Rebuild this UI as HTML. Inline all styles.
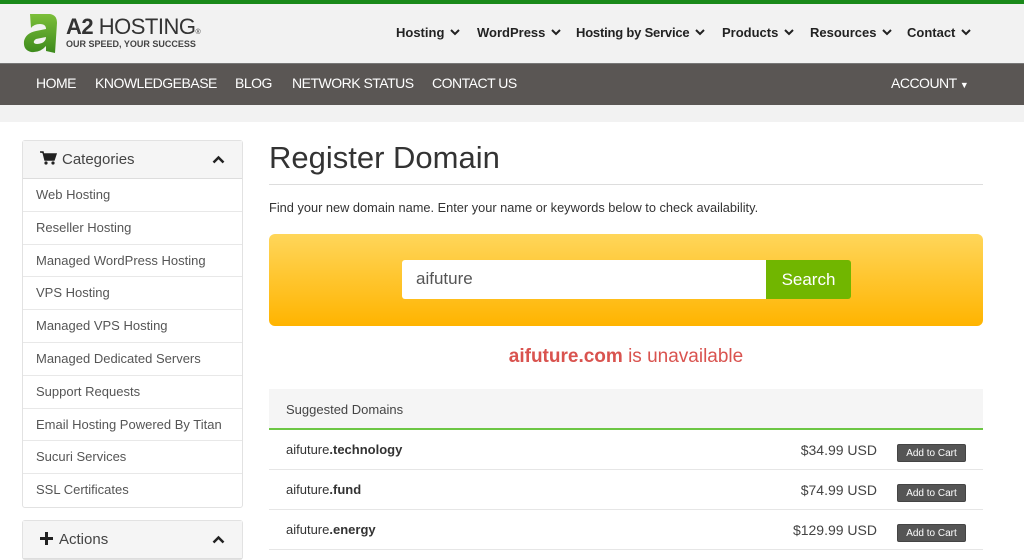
<!DOCTYPE html>
<html><head><meta charset="utf-8"><style>
*{margin:0;padding:0;box-sizing:border-box}
body{width:1024px;height:548px;overflow:hidden;background:#fff;font-family:"Liberation Sans",sans-serif;position:relative;color:#333}
.a{position:absolute}
.top{left:0;top:0;width:1024px;height:4px;background:#1a8a1a}
.hdr{left:0;top:4px;width:1024px;height:59px;background:#f2f2f2}
.mnav{top:25px;font-size:13px;font-weight:bold;color:#222}
.mnav svg{margin-left:6px;vertical-align:1px}
.nav{left:0;top:63px;width:1024px;height:42px;background:#5a5654;border-top:1px solid #777}
.nav span{position:absolute;top:11px;color:#fff;font-size:14px;letter-spacing:-0.5px}
.strip{left:0;top:105px;width:1024px;height:17px;background:#f2f2f2}
.side{left:22px;width:221px;border:1px solid #e2e2e2;border-radius:3px;background:#fff}
.side .h{height:38px;background:#f5f5f5;border-bottom:1px solid #ddd;font-size:15px;color:#444;padding:10px 0 0 17px;position:relative}
.side .i{height:32.8px;border-bottom:1px solid #e8e8e8;font-size:13px;color:#555;padding:8px 0 0 13px}
.car{position:absolute;right:17px;top:14px}
.row{left:269px;width:714px;height:40px;border-bottom:1px solid #e6e6e6;font-size:13px}
.row .d{position:absolute;left:17px;top:12px;color:#333}
.row .p{position:absolute;right:106px;top:12px;font-size:14px;color:#444}
.row .b{position:absolute;right:17px;top:14px;width:69px;height:18px;background:#555;border-radius:2px;color:#fff;font-size:10px;text-align:center;line-height:17px;border:1px solid #444}
</style></head><body>
<div class="a top"></div>
<div class="a hdr"></div>
<svg class="a" style="left:22px;top:13px" width="36" height="42" viewBox="0 0 36 42"><defs><linearGradient id="g" x1="0" y1="0" x2="0" y2="1"><stop offset="0" stop-color="#7cbf3a"/><stop offset="1" stop-color="#3d8a1c"/></linearGradient></defs><path d="M8 1 L28 1 Q35 2 35 10 L33 40 L24 38 L24 33 Q18 40 9 39 Q1 37 2 28 Q4 20 14 18 L24 16 Q24 11 18 11 Q12 11 9 15 Z M24 24 L14 26 Q11 28 12 30 Q14 32 20 30 Q24 28 24 24 Z" fill="url(#g)"/></svg>
<div class="a" style="left:66px;top:14px;font-size:22px;color:#333;letter-spacing:-0.5px"><b>A2</b> HOSTING<span style="font-size:7px">®</span></div>
<div class="a" style="left:66px;top:39px;font-size:9px;font-weight:bold;color:#444">OUR SPEED, YOUR SUCCESS</div>
<div class="a mnav" style="left:396px">Hosting<svg width="10" height="7" viewBox="0 0 10 7"><path d="M1 1 L5 5 L9 1" stroke="#222" stroke-width="2" fill="none"/></svg></div>
<div class="a mnav" style="left:477px">WordPress<svg width="10" height="7" viewBox="0 0 10 7"><path d="M1 1 L5 5 L9 1" stroke="#222" stroke-width="2" fill="none"/></svg></div>
<div class="a mnav" style="left:576px;letter-spacing:-0.2px">Hosting by Service<svg width="10" height="7" viewBox="0 0 10 7"><path d="M1 1 L5 5 L9 1" stroke="#222" stroke-width="2" fill="none"/></svg></div>
<div class="a mnav" style="left:722px">Products<svg width="10" height="7" viewBox="0 0 10 7"><path d="M1 1 L5 5 L9 1" stroke="#222" stroke-width="2" fill="none"/></svg></div>
<div class="a mnav" style="left:810px">Resources<svg width="10" height="7" viewBox="0 0 10 7"><path d="M1 1 L5 5 L9 1" stroke="#222" stroke-width="2" fill="none"/></svg></div>
<div class="a mnav" style="left:907px">Contact<svg width="10" height="7" viewBox="0 0 10 7"><path d="M1 1 L5 5 L9 1" stroke="#222" stroke-width="2" fill="none"/></svg></div>
<div class="a nav"><span style="left:36px">HOME</span><span style="left:95px">KNOWLEDGEBASE</span><span style="left:235px">BLOG</span><span style="left:292px">NETWORK STATUS</span><span style="left:432px">CONTACT US</span><span style="left:891px">ACCOUNT <small style="font-size:9px">▼</small></span></div>
<div class="a strip"></div>

<div class="a side" style="top:140px">
<div class="h"><svg width="17" height="14" viewBox="0 0 17 14" style="margin-right:5px;vertical-align:-1px"><path d="M0 1 H3 L5 9 H14 L16 3 H4" fill="#222" stroke="#222" stroke-width="1.5"/><circle cx="6" cy="12" r="1.6" fill="#222"/><circle cx="13" cy="12" r="1.6" fill="#222"/></svg>Categories<svg class="car" width="13" height="9" viewBox="0 0 13 9"><path d="M1.5 7.5 L6.5 2.5 L11.5 7.5" stroke="#222" stroke-width="2.5" fill="none"/></svg></div>
<div class="i">Web Hosting</div><div class="i">Reseller Hosting</div><div class="i">Managed WordPress Hosting</div><div class="i">VPS Hosting</div><div class="i">Managed VPS Hosting</div><div class="i">Managed Dedicated Servers</div><div class="i">Support Requests</div><div class="i">Email Hosting Powered By Titan</div><div class="i">Sucuri Services</div><div class="i" style="border-bottom:none">SSL Certificates</div>
</div>
<div class="a side" style="top:520px;height:40px"><div class="h"><svg width="13" height="13" viewBox="0 0 13 13" style="margin-right:6px;vertical-align:-1px"><path d="M6.5 0 V13 M0 6.5 H13" stroke="#222" stroke-width="3"/></svg>Actions<svg class="car" width="13" height="9" viewBox="0 0 13 9"><path d="M1.5 7.5 L6.5 2.5 L11.5 7.5" stroke="#222" stroke-width="2.5" fill="none"/></svg></div></div>

<div class="a" style="left:269px;top:140px;font-size:31px;color:#333">Register Domain</div>
<div class="a" style="left:269px;top:184px;width:714px;height:1px;background:#ddd"></div>
<div class="a" style="left:269px;top:200px;font-size:12.8px;color:#333">Find your new domain name. Enter your name or keywords below to check availability.</div>
<div class="a" style="left:269px;top:234px;width:714px;height:92px;border-radius:6px;background:linear-gradient(#ffd65a,#ffb400)"></div>
<div class="a" style="left:402px;top:260px;width:364px;height:39px;background:#fff;border-radius:3px 0 0 3px;font-size:17px;color:#555;padding:9px 0 0 14px">aifuture</div>
<div class="a" style="left:766px;top:260px;width:85px;height:39px;background:#71b600;border-radius:0 3px 3px 0;color:#fff;font-size:17px;text-align:center;line-height:39px">Search</div>
<div class="a" style="left:0;top:346px;width:1024px;text-align:center;padding-left:228px;font-size:19px;color:#d9534f"><b>aifuture.com</b> is unavailable</div>
<div class="a" style="left:269px;top:389px;width:714px;height:41px;background:#f5f5f5;border-bottom:2px solid #6cc644;font-size:13px;color:#444;padding:13px 0 0 17px">Suggested Domains</div>
<div class="a row" style="top:430px"><span class="d">aifuture<b>.technology</b></span><span class="p">$34.99 USD</span><span class="b">Add to Cart</span></div>
<div class="a row" style="top:470px"><span class="d">aifuture<b>.fund</b></span><span class="p">$74.99 USD</span><span class="b">Add to Cart</span></div>
<div class="a row" style="top:510px"><span class="d">aifuture<b>.energy</b></span><span class="p">$129.99 USD</span><span class="b">Add to Cart</span></div>
</body></html>
